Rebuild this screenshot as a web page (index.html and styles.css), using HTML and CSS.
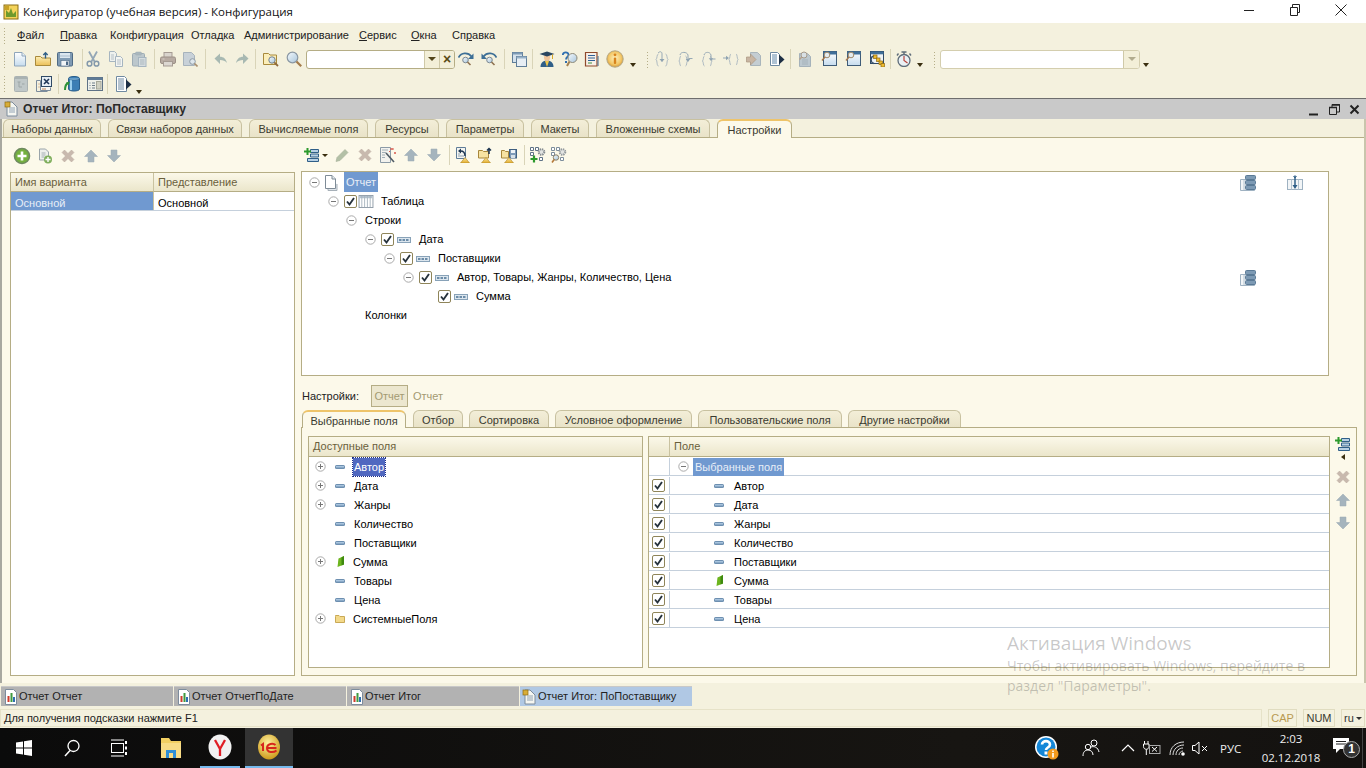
FILE: index.html
```html
<!DOCTYPE html>
<html>
<head>
    <title>Конфигуратор</title>
    <link rel="stylesheet" href="styles.css">
</head>
<body>
    <svg class="defs" width="0" height="0">
        <defs>
            <linearGradient id="g-doc" x1="0" y1="0" x2="0" y2="1"><stop offset="0" stop-color="#fff"/><stop offset="1" stop-color="#c6dcee"/></linearGradient>
            <linearGradient id="g-folder" x1="0" y1="0" x2="0" y2="1"><stop offset="0" stop-color="#fdeeb4"/><stop offset="1" stop-color="#eabf58"/></linearGradient>
            <linearGradient id="g-mag" x1="0" y1="0" x2="1" y2="1"><stop offset="0" stop-color="#f4f9fc"/><stop offset="1" stop-color="#a9c6dc"/></linearGradient>
            <radialGradient id="g-info" cx=".5" cy=".45" r=".55"><stop offset="0" stop-color="#fdf0c0"/><stop offset=".7" stop-color="#f3c766"/><stop offset="1" stop-color="#d69a3a"/></radialGradient>
            <linearGradient id="g-tri" x1="0" y1="0" x2="0" y2="1"><stop offset="0" stop-color="#fbe59a"/><stop offset="1" stop-color="#e2ad2e"/></linearGradient>
        </defs>
        <symbol id="i-logo" viewBox="0 0 16 16"><rect x="1" y="1" width="14" height="14" fill="#f4d35a" stroke="#8a6d12"/><path d="M3 13V6l3 3 2-5 2 6 3-3v6z" fill="#6f9a2d"/><path d="M2 2h4v4H2z" fill="#c9a227"/></symbol>
        <symbol id="i-new" viewBox="0 0 16 16"><path d="M2.500 1.500h7.500l3.500 3.500v10h-11z" fill="url(#g-doc)" stroke="#8fa6bb"/><path d="M10 1.500v3.500h3.500" fill="#e8f0f6" stroke="#8fa6bb"/></symbol>
        <symbol id="i-open" viewBox="0 0 16 16"><path d="M.5 5.500h5l1.500 1.500h8.500v7.500H.5z" fill="url(#g-folder)" stroke="#a98a3c"/><path d="M10.500 7.500V2M8.300 4 10.500 1.800 12.700 4" fill="none" stroke="#2f5f88" stroke-width="1.400"/></symbol>
        <symbol id="i-save" viewBox="0 0 16 16"><rect x=".5" y="1.500" width="15" height="13.500" rx="1" fill="#7f9ab3" stroke="#4e6a85"/><rect x="3" y="2" width="10" height="5" fill="#dbe6ef"/><path d="M3 5h10" stroke="#a9bccd"/><rect x="4" y="9.500" width="8" height="5.500" fill="#f2f5f7" stroke="#4e6a85" stroke-width=".6"/><rect x="9" y="10.500" width="2" height="3.500" fill="#4e6a85"/></symbol>
        <symbol id="i-cut" viewBox="0 0 16 16"><path d="M4 .5l5.500 10M12 .5 6.500 10.500" stroke="#93a6b6" stroke-width="1.800" fill="none"/><ellipse cx="4.500" cy="12.700" rx="2.300" ry="2.400" fill="none" stroke="#8398aa" stroke-width="1.500"/><ellipse cx="11.500" cy="12.700" rx="2.300" ry="2.400" fill="none" stroke="#8398aa" stroke-width="1.500"/></symbol>
        <symbol id="i-copy" viewBox="0 0 16 16"><path d="M1.500 .5h5l2 2v8h-7z" fill="#eef1ee" stroke="#a6b5c0"/><path d="M3 4h3M3 6h3M3 8h3" stroke="#b5c0c8"/><path d="M7.500 5.500h5l2 2v8h-7z" fill="#f4f5f2" stroke="#a6b5c0"/><path d="M9 9h4M9 11h4M9 13h4" stroke="#b5c0c8"/></symbol>
        <symbol id="i-paste" viewBox="0 0 16 16"><rect x="1.500" y="2.500" width="12" height="12.500" rx="1" fill="#bcc7cc" stroke="#9eacb4"/><rect x="4.500" y="1" width="6" height="3" rx="1" fill="#a9b6bd" stroke="#9eacb4" stroke-width=".5"/><rect x="7.500" y="6.500" width="7.500" height="9" fill="#d6dde0" stroke="#a6b5c0"/><path d="M9 9h4.500M9 11h4.500M9 13h4.500" stroke="#aab7be"/></symbol>
        <symbol id="i-print" viewBox="0 0 16 16"><rect x="4" y="1.500" width="8" height="5" fill="#d9d4cd" stroke="#a59b93"/><rect x=".5" y="6" width="15" height="6.500" rx="1.500" fill="#b7aba2" stroke="#9c9087"/><rect x="3.500" y="10.500" width="9" height="4.500" fill="#dcd7d1" stroke="#a59b93"/><path d="M2.500 8h2" stroke="#d6cfc8"/></symbol>
        <symbol id="i-preview" viewBox="0 0 16 16"><path d="M1.500 1.500h8l3 3v10h-11z" fill="#c8d1d8" stroke="#a7b3bc"/><circle cx="10.500" cy="10.500" r="2.800" fill="#dde6ec" stroke="#8e9aa4"/><path d="M12.500 12.500l3 3" stroke="#a98f6f" stroke-width="1.600"/></symbol>
        <symbol id="i-undo" viewBox="0 0 16 16"><path d="M1.500 7.500 7 2.500v3.300c3.500 0 6 2 7 6.200-2-2.300-4-3-7-3V13z" fill="#a8b9b2"/></symbol>
        <symbol id="i-redo" viewBox="0 0 16 16"><path d="M14.500 7.500 9 2.500v3.300c-3.500 0-6 2-7 6.200 2-2.300 4-3 7-3V13z" fill="#a8b9b2"/></symbol>
        <symbol id="i-findfile" viewBox="0 0 16 16"><path d="M.5 2.500h5l1.500 1.500h6.500v9.500H.5z" fill="#fbeeb9" stroke="#a98a3c"/><circle cx="9" cy="9" r="3.200" fill="url(#g-mag)" stroke="#74818c"/><path d="M11.300 11.300l3.700 3.700" stroke="#8f6a3e" stroke-width="1.800"/></symbol>
        <symbol id="i-mag" viewBox="0 0 16 16"><circle cx="6.500" cy="6.500" r="5.300" fill="url(#g-mag)" stroke="#8a97a3" stroke-width="1.200"/><path d="M10.500 10.500l4.700 4.700" stroke="#a47c4c" stroke-width="2.200"/></symbol>
        <symbol id="i-next" viewBox="0 0 16 16"><path d="M.5 6.500C3 1.500 10 1 13.500 5.500" fill="none" stroke="#3d6f96" stroke-width="1.700"/><path d="M15.500 2.500v5.500H10z" fill="#3d6f96"/><circle cx="7.500" cy="9" r="2.800" fill="url(#g-mag)" stroke="#7c8892"/><path d="M9.500 11l3 3" stroke="#8f7250" stroke-width="1.600"/></symbol>
        <symbol id="i-prev" viewBox="0 0 16 16"><path d="M15.500 6.500C13 1.500 6 1 2.500 5.500" fill="none" stroke="#3d6f96" stroke-width="1.700"/><path d="M.5 2.500V8H6z" fill="#3d6f96"/><circle cx="8.500" cy="9" r="2.800" fill="url(#g-mag)" stroke="#7c8892"/><path d="M10.500 11l3 3" stroke="#8f7250" stroke-width="1.600"/></symbol>
        <symbol id="i-windows" viewBox="0 0 16 16"><rect x="1.500" y="1.500" width="10" height="10" fill="#d5e2ed" stroke="#5f7d98"/><rect x="1.500" y="1.500" width="10" height="2" fill="#7f9cb6"/><rect x="5.500" y="5.500" width="10" height="10" fill="#e7eef4" stroke="#5f7d98"/><rect x="5.500" y="5.500" width="10" height="2" fill="#98b2c8"/></symbol>
        <symbol id="i-student" viewBox="0 0 16 16"><path d="M1.500 16c0-4 2.500-6.500 6.500-6.500s6.500 2.500 6.500 6.500z" fill="#2f5f88"/><path d="M6 10l2 6 2-6z" fill="#eec64a"/><ellipse cx="8" cy="6.500" rx="3" ry="3.500" fill="#f2c59a"/><path d="M.5 3 8 .5 15.500 3 8 5.500z" fill="#2a4660"/><path d="M13.500 3.500v4.500" stroke="#d9a92a"/></symbol>
        <symbol id="i-helpfind" viewBox="0 0 16 16"><path d="M.8 4C1 .5 6.500 .5 6.500 3.800 6.500 6 4 6 4 8.500" fill="none" stroke="#2f6fb0" stroke-width="1.800"/><rect x="3" y="10" width="2" height="2" fill="#2f6fb0"/><circle cx="10.500" cy="7" r="4.500" fill="url(#g-mag)" stroke="#8e8a78"/><path d="M7.500 10.500 5 15" stroke="#a4814f" stroke-width="2"/></symbol>
        <symbol id="i-book" viewBox="0 0 16 16"><path d="M1.500 1.500h11.500v13.500H1.500z" fill="#f7efe6" stroke="#8f4a2b" stroke-width="1.200"/><path d="M4 4.500h7M4 7h7M4 9.500h7" stroke="#2f6196"/><path d="M4 12h4" stroke="#3f8f3f"/><path d="M14 5v10" stroke="#5f7d98" stroke-width="1.200"/></symbol>
        <symbol id="i-info" viewBox="0 0 18 18"><circle cx="9" cy="9" r="8.200" fill="url(#g-info)" stroke="#b5a986"/><rect x="7.800" y="7.500" width="2.400" height="6.500" rx="1" fill="#d8831c"/><circle cx="9" cy="4.800" r="1.400" fill="#d8831c"/></symbol>
        <symbol id="i-debug1" viewBox="0 0 16 16"><path d="M4.500 3C2.500 3 3.500 7.500 2 8.500 3.500 9.500 2.500 15 4.500 15M11.500 3c2 0 1 4.500 2.500 5.500-1.500 1-.5 6.500-2.500 6.500" fill="none" stroke="#afbbc2"/><path d="M4 2C6 0 8 .5 8 3v7.500" fill="none" stroke="#97a9b5"/><path d="M5.500 8 8 11l2.500-3z" fill="#8fa3b1"/></symbol>
        <symbol id="i-debug2" viewBox="0 0 16 16"><path d="M4 5C2.500 5 3.200 9 2 10c1.200 1 .5 5 2 5M8.500 5c1.500 0 .8 4 2 5-1.200 1-.5 5-2 5" fill="none" stroke="#afbbc2"/><path d="M3 4c.5-3.500 7-3.500 8 0v5.500" fill="none" stroke="#97a9b5"/><path d="M11 11 8.800 8h4.400z" fill="#8fa3b1"/><path d="M11.500 7.500h4" stroke="#97a9b5"/></symbol>
        <symbol id="i-debug3" viewBox="0 0 16 16"><path d="M4.500 5C3 5 3.700 9 2.500 10c1.200 1 .5 5 2 5M10 5c1.500 0 .8 4 2 5-1.200 1-.5 5-2 5" fill="none" stroke="#afbbc2"/><path d="M4 4C5 .5 10 .5 11 4v4" fill="none" stroke="#97a9b5"/><path d="M11 10 8.800 7.200h4.400z" fill="#8fa3b1"/><path d="M12 8h3.500" stroke="#97a9b5"/></symbol>
        <symbol id="i-debug4" viewBox="0 0 16 16"><path d="M8 3C6.500 3 7.200 7.500 6 8.500 7.200 9.500 6.500 14 8 14M13 3c1.500 0 .8 4.500 2 5.500-1.200 1-.5 5.500-2 5.500" fill="none" stroke="#afbbc2"/><path d="M0 7h4" stroke="#97a9b5"/><path d="M6 7 3 4.800v4.400z" fill="#8fa3b1"/></symbol>
        <symbol id="i-debug5" viewBox="0 0 16 16"><path d="M4.500 1.500h7l3 3v10h-10z" fill="#c4cdd2" stroke="#a9b5bb"/><path d="M.5 6h4V3L10 8.500 4.500 14v-3h-4z" fill="#c8b5a2" stroke="#a9957f" stroke-width=".7"/></symbol>
        <symbol id="i-debug6" viewBox="0 0 16 16"><path d="M1.500 1.500h7l2 2v11h-9z" fill="#fff" stroke="#6f8aa2"/><path d="M3 4h5M3 6h5M3 8h5M3 10h5M3 12h5" stroke="#5e86a8"/><path d="M10 3.500l5.500 5-5.500 5z" fill="#1d2f45"/></symbol>
        <symbol id="i-calldoc" viewBox="0 0 16 16"><path d="M2.500 2.500h8l3 3v10h-11z" fill="#bcc8cf" stroke="#a5b2ba"/><path d="M5 9h6M5 11h6M5 13h6" stroke="#a5b2ba"/><circle cx="7" cy="4" r="3" fill="#d8e0e4" stroke="#a69a8a"/><path d="M4.700 6 2.500 8.500" stroke="#b5a08a" stroke-width="1.300"/></symbol>
        <symbol id="i-watch" viewBox="0 0 16 16"><rect x="2.500" y=".5" width="13" height="14" fill="url(#g-doc)" stroke="#3f5c78"/><rect x="2.500" y=".5" width="13" height="3" fill="#3f6f99"/><circle cx="6" cy="4" r="2.800" fill="#e4ecf0" stroke="#a08a6c"/><path d="M4 6 1 9.500" stroke="#a4764c" stroke-width="1.500"/></symbol>
        <symbol id="i-chain" viewBox="0 0 16 16"><rect x="1.500" y=".5" width="13" height="12" fill="#eef3f7" stroke="#2f4a66"/><rect x="1.500" y=".5" width="13" height="2.800" fill="#3f6f99"/><path d="M5 5C1.500 5.500 .5 11 5 12.500" fill="none" stroke="#38506a" stroke-width="1.500"/><rect x="4.500" y="4" width="3.500" height="3.500" fill="#eebb2f" stroke="#8f6a10" stroke-width=".7"/><rect x="7.500" y="7" width="3.500" height="3.500" fill="#eebb2f" stroke="#8f6a10" stroke-width=".7"/><rect x="10" y="10" width="3.500" height="3.500" fill="#eebb2f" stroke="#8f6a10" stroke-width=".7"/><rect x="12" y="12.500" width="3.500" height="3.500" fill="#eebb2f" stroke="#8f6a10" stroke-width=".7"/></symbol>
        <symbol id="i-timer" viewBox="0 0 16 16"><circle cx="8" cy="9.500" r="6" fill="#eaf1f5" stroke="#5f6d7a" stroke-width="1.300"/><path d="M8 5v4.500l3.500 2.500" fill="none" stroke="#b8433a" stroke-width="1.200"/><path d="M5.500 1h5M8 1v2" stroke="#5f6d7a" stroke-width="1.400"/><path d="M2.500 2.500 1 4.500M13.500 2.500l1.500 2" stroke="#5f6d7a" stroke-width="1.400"/></symbol>
        <symbol id="i-grey1" viewBox="0 0 16 16"><rect x="1.500" y=".5" width="13" height="15" rx="1" fill="#c0c8c8" stroke="#aab2b2"/><rect x="2" y="1" width="12" height="2" fill="#a9b2b2"/><path d="M4.500 6h3M6 6v5h3M9 8h2.500" fill="none" stroke="#9da6a6"/></symbol>
        <symbol id="i-cross-doc" viewBox="0 0 16 16"><path d="M.5 4.500h4v10h10v-3" fill="#f7f7f2" stroke="#7c8c9c"/><path d="M.5 4.500v11h11" fill="none" stroke="#7c8c9c"/><rect x="5.500" y=".5" width="10" height="10" fill="#e6eef5" stroke="#2f4a66"/><path d="M8 3l5 5M13 3 8 8" stroke="#1e3555" stroke-width="1.600"/><path d="M2.500 8h1M2.500 11h1M6 13h4" stroke="#c0855a"/></symbol>
        <symbol id="i-db" viewBox="0 0 16 16"><path d="M4.500 2.500c0-2.700 11-2.700 11 0v10.500c0 2.700-11 2.700-11 0z" fill="#3d7fb5" stroke="#2b5f8b"/><path d="M7 3v11" stroke="#9dd0ee" stroke-width="2"/><path d="M4.500 2.500c0 2 11 2 11 0" fill="#8dbcdc" stroke="#2b5f8b" stroke-width=".6"/><path d="M1 14c0-4 1-6 3-7" fill="none" stroke="#2d9238" stroke-width="2"/><path d="M2 6.500 6 5.500 4.500 9.500z" fill="#2d9238"/></symbol>
        <symbol id="i-form" viewBox="0 0 16 16"><rect x=".5" y="1.500" width="15" height="13" fill="#eef0ea" stroke="#5f7286"/><rect x=".5" y="1.500" width="15" height="2.500" fill="#5f7b96"/><path d="M2.500 7h1M5 7h3M2.500 9.500h1M5 9.500h3M2.500 12h1M5 12h3" stroke="#6d7c88"/><rect x="9.500" y="5.500" width="4.500" height="7.500" fill="#cfd0c2" stroke="#a6a89a"/></symbol>
        <symbol id="i-docarrow" viewBox="0 0 16 16"><path d="M.5 .5h8l2 2v13H.5z" fill="#fff" stroke="#6f8aa2"/><path d="M2 3h6M2 5h6M2 7h6M2 9h6M2 11h6M2 13h6" stroke="#6f8aa2"/><path d="M10 3.500l5.500 5-5.500 5z" fill="#1d2f45"/></symbol>
        <symbol id="i-wdoc" viewBox="0 0 16 16"><path d="M3 1h5l5 5v9H3z" fill="#f5f6f1" stroke="#7d8c9c"/><rect x="1" y="1" width="5" height="5" fill="#d8ad38" stroke="#8f6d14" stroke-width=".7"/><path d="M5 7h6M5 9h6M5 11h6" stroke="#93a4b5"/></symbol>
        <symbol id="i-report" viewBox="0 0 16 16"><path d="M2.500 .5h8l3 3v12h-11z" fill="#fff" stroke="#7d8c9c"/><rect x="4.500" y="7" width="2" height="6" fill="#cf3b2b"/><rect x="7.500" y="4" width="2" height="9" fill="#3f9a3f"/><rect x="10" y="8" width="2" height="5" fill="#2f6fb0"/></symbol>
        <symbol id="i-addgreen" viewBox="0 0 18 18"><circle cx="9" cy="9" r="7.500" fill="#74b03f" stroke="#6f8a60" stroke-width="1.600"/><path d="M9 4.500v9M4.500 9h9" stroke="#fff" stroke-width="2.600"/></symbol>
        <symbol id="i-addcopy" viewBox="0 0 16 16"><path d="M2.500 1h6l3 3v8h-9z" fill="#eef0ec" stroke="#9aa4aa"/><path d="M4.500 5h4M4.500 7h4M4.500 9h3" stroke="#a4aeb4"/><circle cx="11" cy="11.500" r="4" fill="#7fae5c"/><path d="M11 9v5M8.500 11.500h5" stroke="#fff" stroke-width="1.400"/></symbol>
        <symbol id="i-x" viewBox="0 0 16 16"><path d="M2 4.500 4.500 2 8 5.500 11.500 2 14 4.500 10.500 8 14 11.500 11.500 14 8 10.500 4.500 14 2 11.500 5.500 8z" fill="#c8b9ae" stroke="#b8a99e" stroke-width=".5"/></symbol>
        <symbol id="i-up" viewBox="0 0 16 16"><path d="M8 2l6.500 6.500H11V14H5V8.500H1.500z" fill="#a5b4bd" stroke="#98a8b2" stroke-width=".5"/></symbol>
        <symbol id="i-down" viewBox="0 0 16 16"><path d="M8 14 1.500 7.500H5V2h6v5.500h3.500z" fill="#a5b4bd" stroke="#98a8b2" stroke-width=".5"/></symbol>
        <symbol id="i-addlist" viewBox="0 0 16 16"><path d="M6.500 2.500h8v3h-8zM6.500 7h8v3h-8zM3.500 11.500h11v3h-11z" fill="#b7d0e4" stroke="#2f5f88"/><path d="M3.500 1v7M0 4.500h7" stroke="#2d9a2d" stroke-width="2"/></symbol>
        <symbol id="i-pencil" viewBox="0 0 16 16"><path d="M11 2.500l3 3L6 13.500l-4 1 1-4z" fill="#b3c0a6" stroke="#a4b098" stroke-width=".6"/></symbol>
        <symbol id="i-wand" viewBox="0 0 16 16"><path d="M.5 .5h10v15H.5z" fill="#f2f2ee" stroke="#8b9aa6"/><path d="M2 3h6M2 5.500h4M2 8h3M2 10.500h3" stroke="#a2afb8"/><path d="M6 6l8 9" stroke="#4f5b65" stroke-width="1.600"/><path d="M12 1v2M10 2h4M15 5v2M14 6h2M9 4.500h1" stroke="#d8564a"/></symbol>
        <symbol id="i-sortdoc" viewBox="0 0 16 16"><path d="M1.500 .5h9v11h-9z" fill="#f4f5f1" stroke="#5f7d98"/><path d="M3 9h6M3 7h2" stroke="#8fa0b0"/><path d="M10 9c0-4-1.500-5-4.500-5" fill="none" stroke="#1d3550" stroke-width="1.400"/><path d="M3 4l3-2.500v5z" fill="#1d3550"/><path d="M5.500 16l4.500-5.500 4.500 5.500z" fill="url(#g-tri)" stroke="#b0862a" stroke-width=".6"/></symbol>
        <symbol id="i-upload" viewBox="0 0 16 16"><path d="M.5 3.500h4l1 1h5v6.500h-10z" fill="#f7e3a2" stroke="#a8873a"/><path d="M11 7V1.500M9 3.500l2-2 2 2" fill="none" stroke="#1d3550" stroke-width="1.500"/><path d="M3.500 16 8 10.500l4.500 5.500z" fill="url(#g-tri)" stroke="#b0862a" stroke-width=".6"/></symbol>
        <symbol id="i-floppy2" viewBox="0 0 16 16"><path d="M.5 3.500h3l1 1h3v6.500h-7z" fill="#f7e3a2" stroke="#a8873a"/><rect x="8.500" y="2.500" width="7" height="8.500" fill="#7d9ab8" stroke="#3f5f80"/><rect x="10" y="3" width="4" height="3" fill="#eef3f7"/><rect x="10" y="8" width="4" height="3" fill="#d6e0e8"/><path d="M3.500 16 8 10.500l4.500 5.500z" fill="url(#g-tri)" stroke="#b0862a" stroke-width=".6"/></symbol>
        <symbol id="i-gearadd" viewBox="0 0 16 16"><path d="M.5 .5h3v3h-3zM.5 5.500h3v3h-3zM5.500 .5h3v3h-3zM9.500 10.500h3v3h-3z" fill="#fff" stroke="#5f7286"/><circle cx="11.500" cy="5" r="2.800" fill="#e2e4e2" stroke="#868c90" stroke-width="2" stroke-dasharray="1.400 .8"/><path d="M4 8.500v7M.5 12h7" stroke="#2d9a2d" stroke-width="2.200"/></symbol>
        <symbol id="i-gearfind" viewBox="0 0 16 16"><path d="M.5 .5h3v3h-3zM.5 5.500h3v3h-3zM5.500 .5h3v3h-3zM9.500 10.500h3v3h-3z" fill="#fff" stroke="#7c8d9c"/><circle cx="11.500" cy="5" r="2.800" fill="#e2e4e2" stroke="#93999d" stroke-width="2" stroke-dasharray="1.400 .8"/><circle cx="5" cy="10.500" r="2.700" fill="url(#g-mag)" stroke="#8a7f66"/><path d="M3.200 12.500 1 15.500" stroke="#b5793a" stroke-width="1.600"/></symbol>
        <symbol id="i-doc" viewBox="0 0 16 16"><path d="M5 4.500v11h9V9" fill="#dfe5ea" stroke="#a7b0b8"/><path d="M2.500 .5h6.500l3.500 3.500v9.500h-10z" fill="#fff" stroke="#7e8b97"/><path d="M9 .5v3.500h3.500" fill="#e8edf1" stroke="#7e8b97"/></symbol>
        <symbol id="i-table" viewBox="0 0 16 14"><rect x=".5" y=".5" width="15" height="13" fill="#fff" stroke="#8c99a5"/><rect x="1" y="1" width="14" height="2.500" fill="#b5c3cf"/><path d="M3.500 1v12M6.500 1v12M9.500 1v12M12.500 1v12" stroke="#a8b4be"/></symbol>
        <symbol id="i-group" viewBox="0 0 14 6"><rect x=".5" y=".5" width="13" height="5" fill="#dce6ee" stroke="#88a2b8"/><rect x="2" y="2" width="2.500" height="2" fill="#6c8ca8"/><rect x="5.500" y="2" width="2.500" height="2" fill="#6c8ca8"/><rect x="9" y="2" width="2.500" height="2" fill="#6c8ca8"/></symbol>
        <symbol id="i-field" viewBox="0 0 10 4"><rect x="0" y="0" width="10" height="4" rx="1.500" fill="#6d8fb0"/><rect x="1" y="1" width="8" height="1.500" fill="#a8c4de"/></symbol>
        <symbol id="i-sum" viewBox="0 0 7 11"><path d="M1.500 2.500 7 0v8.500L.5 11z" fill="#6db51f"/><path d="M4.500 1.500 7 0v8.500l-2.500 1z" fill="#3f8a10"/></symbol>
        <symbol id="i-folder" viewBox="0 0 10 8"><path d="M.5 1.500V.5h3.500l1 1h4.500v6h-9z" fill="#f3d98a" stroke="#c9a956"/></symbol>
        <symbol id="i-minus" viewBox="0 0 11 11"><circle cx="5.500" cy="5.500" r="4.700" fill="#fff" stroke="#a9a9a9"/><path d="M3 5.500h5" stroke="#777"/></symbol>
        <symbol id="i-plus" viewBox="0 0 11 11"><circle cx="5.500" cy="5.500" r="4.700" fill="#fff" stroke="#a9a9a9"/><path d="M3 5.500h5M5.500 3v5" stroke="#777"/></symbol>
        <symbol id="i-tick" viewBox="0 0 11 11"><path d="M2 5.500l2.500 3L9 2" fill="none" stroke="#26323c" stroke-width="1.900"/></symbol>
        <symbol id="i-stack" viewBox="0 0 16 16"><path d="M.5 4.500h14v11H.5z" fill="#f2f5f7" stroke="#9fb2c2"/><path d="M4 5v10" stroke="#b4c4d0"/><rect x="5.500" y=".5" width="10" height="4" rx="1" fill="#7d9ab4" stroke="#5a7a96"/><rect x="5.500" y="5.500" width="10" height="4" rx="1" fill="#7d9ab4" stroke="#5a7a96"/><rect x="5.500" y="10.500" width="10" height="4" rx="1" fill="#7d9ab4" stroke="#5a7a96"/></symbol>
        <symbol id="i-pin" viewBox="0 0 16 16"><rect x=".5" y="4.500" width="15" height="10" fill="#f2f5f7" stroke="#9fb2c2"/><path d="M4.500 4.500v10M11.500 4.500v10" stroke="#b4c4d0"/><path d="M8 .5v12" stroke="#2f5f88" stroke-width="1.500"/><path d="M5.500 10 8 14l2.500-4z" fill="#2f5f88"/><path d="M6.500 1 8 3l1.500-2" fill="none" stroke="#2f5f88"/></symbol>
    </svg>

    <div class="titlebar">
        <svg class="ico16 title-logo"><use href="#i-logo"/></svg>
        <span class="title-text">Конфигуратор (учебная версия) - Конфигурация</span>
        <div class="win-btns">
            <svg width="46" height="20" viewBox="0 0 46 20"><path d="M18 10.500h10" stroke="#222"/></svg>
            <svg width="46" height="20" viewBox="0 0 46 20"><path d="M18.500 7.500h7v8h-7zM20.500 7.500v-3h7v8h-2" fill="none" stroke="#222"/></svg>
            <svg width="46" height="20" viewBox="0 0 46 20"><path d="M17.500 4.500l11 11M28.500 4.500l-11 11" stroke="#222"/></svg>
        </div>
    </div>

    <div class="menubar">
        <div class="grip"></div>
        <div class="menu-items">
            <span><u>Ф</u>айл</span>
            <span><u>П</u>равка</span>
            <span>Конфигурация</span>
            <span>Отладка</span>
            <span>Администрирование</span>
            <span><u>С</u>ервис</span>
            <span><u>О</u>кна</span>
            <span>Сп<u>р</u>авка</span>
        </div>
    </div>

    <div class="toolbar tb-main">
        <div class="grip"></div>
        <div class="tb-start"></div>
        <svg class="tool"><use href="#i-new"/></svg>
        <svg class="tool"><use href="#i-open"/></svg>
        <svg class="tool"><use href="#i-save"/></svg>
        <i class="sep sep-file"></i>
        <svg class="tool"><use href="#i-cut"/></svg>
        <svg class="tool"><use href="#i-copy"/></svg>
        <svg class="tool"><use href="#i-paste"/></svg>
        <i class="sep sep-edit"></i>
        <svg class="tool"><use href="#i-print"/></svg>
        <svg class="tool"><use href="#i-preview"/></svg>
        <i class="sep sep-print"></i>
        <svg class="tool tool-narrow"><use href="#i-undo"/></svg>
        <svg class="tool tool-narrow"><use href="#i-redo"/></svg>
        <i class="sep sep-undo"></i>
        <svg class="tool"><use href="#i-findfile"/></svg>
        <svg class="tool"><use href="#i-mag"/></svg>
        <div class="combo search-combo">
            <div class="combo-input"></div>
            <div class="combo-btn"><span class="tri"></span></div>
            <div class="combo-btn combo-x">×</div>
        </div>
        <svg class="tool"><use href="#i-next"/></svg>
        <svg class="tool"><use href="#i-prev"/></svg>
        <i class="sep sep-find"></i>
        <svg class="tool tool-tight"><use href="#i-windows"/></svg>
        <i class="sep sep-win"></i>
        <svg class="tool"><use href="#i-student"/></svg>
        <svg class="tool"><use href="#i-helpfind"/></svg>
        <svg class="tool"><use href="#i-book"/></svg>
        <svg class="tool tool-info"><use href="#i-info"/></svg>
        <span class="drop"></span>
        <div class="grip grip-mid"></div>
        <svg class="tool tool-debug"><use href="#i-debug1"/></svg>
        <svg class="tool tool-d"><use href="#i-debug2"/></svg>
        <svg class="tool tool-d"><use href="#i-debug3"/></svg>
        <svg class="tool tool-d"><use href="#i-debug4"/></svg>
        <svg class="tool tool-d"><use href="#i-debug5"/></svg>
        <svg class="tool tool-d"><use href="#i-debug6"/></svg>
        <i class="sep sep-debug"></i>
        <svg class="tool tool-w"><use href="#i-calldoc"/></svg>
        <svg class="tool tool-w"><use href="#i-watch"/></svg>
        <svg class="tool tool-w"><use href="#i-watch"/></svg>
        <svg class="tool tool-w"><use href="#i-chain"/></svg>
        <i class="sep sep-watch"></i>
        <svg class="tool"><use href="#i-timer"/></svg>
        <span class="drop drop-timer"></span>
        <div class="grip grip-mid grip-last"></div>
        <div class="combo wide-combo">
            <div class="combo-input"></div>
            <div class="combo-btn combo-off"><span class="tri"></span></div>
        </div>
        <span class="drop drop-end"></span>
    </div>

    <div class="toolbar tb-second">
        <div class="grip"></div>
        <div class="tb-start tb-start-2"></div>
        <svg class="tool"><use href="#i-grey1"/></svg>
        <svg class="tool"><use href="#i-cross-doc"/></svg>
        <i class="sep sep-s1"></i>
        <svg class="tool"><use href="#i-db"/></svg>
        <svg class="tool"><use href="#i-form"/></svg>
        <i class="sep sep-s2"></i>
        <svg class="tool"><use href="#i-docarrow"/></svg>
        <span class="drop drop-second"></span>
    </div>

    <div class="window">
        <div class="caption">
            <svg class="ico16 caption-ico"><use href="#i-wdoc"/></svg>
            <b class="caption-text">Отчет Итог: ПоПоставщику</b>
            <div class="caption-btns">
                <svg width="13" height="13" viewBox="0 0 13 13"><path d="M1 11.500h9" stroke="#222" stroke-width="2"/></svg>
                <svg width="13" height="13" viewBox="0 0 13 13"><path d="M1.500 4.500h7v7h-7z M4 4V1.500h7.500V9H9" fill="none" stroke="#222"/><path d="M1 4.500h8M4 2h8" stroke="#222" stroke-width="1.300"/></svg>
                <svg width="13" height="13" viewBox="0 0 13 13"><path d="M2.500 2.500l8 8M10.500 2.500l-8 8" stroke="#222" stroke-width="2"/></svg>
            </div>
        </div>

        <div class="tabs main-tabs">
            <span class="tab t-a">Наборы данных</span>
            <span class="tab t-b">Связи наборов данных</span>
            <span class="tab t-c">Вычисляемые поля</span>
            <span class="tab t-d">Ресурсы</span>
            <span class="tab t-e">Параметры</span>
            <span class="tab t-f">Макеты</span>
            <span class="tab t-g">Вложенные схемы</span>
            <span class="tab t-h active">Настройки</span>
        </div>

        <div class="page">
            <div class="variants">
                <div class="mini-toolbar left-tools">
                    <svg class="ico18"><use href="#i-addgreen"/></svg>
                    <svg class="ico16"><use href="#i-addcopy"/></svg>
                    <svg class="ico16"><use href="#i-x"/></svg>
                    <svg class="ico16"><use href="#i-up"/></svg>
                    <svg class="ico16"><use href="#i-down"/></svg>
                </div>
                <div class="variant-table">
                    <div class="head-row">
                        <div class="head-cell variant-name">Имя варианта</div>
                        <div class="head-cell variant-view">Представление</div>
                    </div>
                    <div class="variant-row">
                        <div class="variant-name selected">Основной</div>
                        <div class="variant-view">Основной</div>
                    </div>
                </div>
            </div>

            <div class="settings">
                <div class="mini-toolbar right-tools">
                    <svg class="ico16"><use href="#i-addlist"/></svg>
                    <span class="drop drop-add"></span>
                    <svg class="ico16"><use href="#i-pencil"/></svg>
                    <svg class="ico16"><use href="#i-x"/></svg>
                    <svg class="ico16"><use href="#i-wand"/></svg>
                    <svg class="ico16"><use href="#i-up"/></svg>
                    <svg class="ico16"><use href="#i-down"/></svg>
                    <i class="sep sep-flat"></i>
                    <svg class="ico16"><use href="#i-sortdoc"/></svg>
                    <svg class="ico16"><use href="#i-upload"/></svg>
                    <svg class="ico16"><use href="#i-floppy2"/></svg>
                    <i class="sep sep-flat"></i>
                    <svg class="ico16"><use href="#i-gearadd"/></svg>
                    <svg class="ico16 gear-second"><use href="#i-gearfind"/></svg>
                </div>

                <div class="tree">
                    <div class="tree-row lv0">
                        <svg class="tgl"><use href="#i-minus"/></svg>
                        <span class="node-ico"><svg class="ico16"><use href="#i-doc"/></svg></span>
                        <span class="label selected">Отчет</span>
                        <div class="tree-side">
                            <svg class="ico16"><use href="#i-stack"/></svg>
                            <svg class="ico16"><use href="#i-pin"/></svg>
                        </div>
                    </div>
                    <div class="tree-row lv1">
                        <svg class="tgl"><use href="#i-minus"/></svg>
                        <span class="chk"><svg><use href="#i-tick"/></svg></span>
                        <span class="node-ico"><svg class="table-ico"><use href="#i-table"/></svg></span>
                        <span class="label">Таблица</span>
                    </div>
                    <div class="tree-row lv2">
                        <svg class="tgl"><use href="#i-minus"/></svg>
                        <span class="label bare">Строки</span>
                    </div>
                    <div class="tree-row lv3">
                        <svg class="tgl"><use href="#i-minus"/></svg>
                        <span class="chk"><svg><use href="#i-tick"/></svg></span>
                        <span class="node-ico"><svg class="group"><use href="#i-group"/></svg></span>
                        <span class="label">Дата</span>
                    </div>
                    <div class="tree-row lv4">
                        <svg class="tgl"><use href="#i-minus"/></svg>
                        <span class="chk"><svg><use href="#i-tick"/></svg></span>
                        <span class="node-ico"><svg class="group"><use href="#i-group"/></svg></span>
                        <span class="label">Поставщики</span>
                    </div>
                    <div class="tree-row lv5">
                        <svg class="tgl"><use href="#i-minus"/></svg>
                        <span class="chk"><svg><use href="#i-tick"/></svg></span>
                        <span class="node-ico"><svg class="group"><use href="#i-group"/></svg></span>
                        <span class="label">Автор, Товары, Жанры, Количество, Цена</span>
                        <div class="tree-side">
                            <svg class="ico16"><use href="#i-stack"/></svg>
                        </div>
                    </div>
                    <div class="tree-row lv6">
                        <span class="tgl"></span>
                        <span class="chk"><svg><use href="#i-tick"/></svg></span>
                        <span class="node-ico"><svg class="group"><use href="#i-group"/></svg></span>
                        <span class="label">Сумма</span>
                    </div>
                    <div class="tree-row lv2">
                        <span class="tgl"></span>
                        <span class="label bare">Колонки</span>
                    </div>
                </div>

                <div class="settings-for">
                    <span class="settings-label">Настройки:</span>
                    <span class="settings-btn">Отчет</span>
                    <span class="settings-name">Отчет</span>
                </div>

                <div class="tabs sub-tabs">
                    <span class="tab s-a active">Выбранные поля</span>
                    <span class="tab s-b">Отбор</span>
                    <span class="tab s-c">Сортировка</span>
                    <span class="tab s-d">Условное оформление</span>
                    <span class="tab s-e">Пользовательские поля</span>
                    <span class="tab s-f">Другие настройки</span>
                </div>

                <div class="sub-page">
                    <div class="fields">
                        <div class="head-cell fields-head">Доступные поля</div>
                        <div class="field-row"><svg class="tgl"><use href="#i-plus"/></svg><span class="f-ico"><svg class="dash"><use href="#i-field"/></svg></span><span class="field-name focused">Автор</span></div>
                        <div class="field-row"><svg class="tgl"><use href="#i-plus"/></svg><span class="f-ico"><svg class="dash"><use href="#i-field"/></svg></span><span class="field-name">Дата</span></div>
                        <div class="field-row"><svg class="tgl"><use href="#i-plus"/></svg><span class="f-ico"><svg class="dash"><use href="#i-field"/></svg></span><span class="field-name">Жанры</span></div>
                        <div class="field-row"><span class="tgl"></span><span class="f-ico"><svg class="dash"><use href="#i-field"/></svg></span><span class="field-name">Количество</span></div>
                        <div class="field-row"><span class="tgl"></span><span class="f-ico"><svg class="dash"><use href="#i-field"/></svg></span><span class="field-name">Поставщики</span></div>
                        <div class="field-row"><svg class="tgl"><use href="#i-plus"/></svg><span class="f-ico"><svg class="sum"><use href="#i-sum"/></svg></span><span class="field-name name-tight">Сумма</span></div>
                        <div class="field-row"><span class="tgl"></span><span class="f-ico"><svg class="dash"><use href="#i-field"/></svg></span><span class="field-name">Товары</span></div>
                        <div class="field-row"><span class="tgl"></span><span class="f-ico"><svg class="dash"><use href="#i-field"/></svg></span><span class="field-name">Цена</span></div>
                        <div class="field-row"><svg class="tgl"><use href="#i-plus"/></svg><span class="f-ico"><svg class="folder"><use href="#i-folder"/></svg></span><span class="field-name name-tight">СистемныеПоля</span></div>
                    </div>

                    <div class="chosen">
                        <div class="chosen-head">
                            <div class="head-cell col-check"></div>
                            <div class="head-cell col-field">Поле</div>
                        </div>
                        <div class="chosen-row">
                            <div class="col-check"></div>
                            <div class="col-field chosen-root"><svg class="tgl"><use href="#i-minus"/></svg><span class="root-name selected">Выбранные поля</span></div>
                        </div>
                        <div class="chosen-row"><div class="col-check"><span class="chk"><svg><use href="#i-tick"/></svg></span></div><div class="col-field"><span class="f-ico"><svg class="dash"><use href="#i-field"/></svg></span><span class="field-name">Автор</span></div></div>
                        <div class="chosen-row"><div class="col-check"><span class="chk"><svg><use href="#i-tick"/></svg></span></div><div class="col-field"><span class="f-ico"><svg class="dash"><use href="#i-field"/></svg></span><span class="field-name">Дата</span></div></div>
                        <div class="chosen-row"><div class="col-check"><span class="chk"><svg><use href="#i-tick"/></svg></span></div><div class="col-field"><span class="f-ico"><svg class="dash"><use href="#i-field"/></svg></span><span class="field-name">Жанры</span></div></div>
                        <div class="chosen-row"><div class="col-check"><span class="chk"><svg><use href="#i-tick"/></svg></span></div><div class="col-field"><span class="f-ico"><svg class="dash"><use href="#i-field"/></svg></span><span class="field-name">Количество</span></div></div>
                        <div class="chosen-row"><div class="col-check"><span class="chk"><svg><use href="#i-tick"/></svg></span></div><div class="col-field"><span class="f-ico"><svg class="dash"><use href="#i-field"/></svg></span><span class="field-name">Поставщики</span></div></div>
                        <div class="chosen-row"><div class="col-check"><span class="chk"><svg><use href="#i-tick"/></svg></span></div><div class="col-field"><span class="f-ico"><svg class="sum"><use href="#i-sum"/></svg></span><span class="field-name">Сумма</span></div></div>
                        <div class="chosen-row"><div class="col-check"><span class="chk"><svg><use href="#i-tick"/></svg></span></div><div class="col-field"><span class="f-ico"><svg class="dash"><use href="#i-field"/></svg></span><span class="field-name">Товары</span></div></div>
                        <div class="chosen-row"><div class="col-check"><span class="chk"><svg><use href="#i-tick"/></svg></span></div><div class="col-field"><span class="f-ico"><svg class="dash"><use href="#i-field"/></svg></span><span class="field-name">Цена</span></div></div>
                    </div>

                    <div class="side-tools">
                        <svg class="ico16"><use href="#i-addlist"/></svg>
                        <span class="tri-left"></span>
                        <svg class="ico16"><use href="#i-x"/></svg>
                        <svg class="ico16"><use href="#i-up"/></svg>
                        <svg class="ico16"><use href="#i-down"/></svg>
                    </div>
                </div>
            </div>
        </div>
    </div>

    <div class="doc-tabs">
        <div class="doc-tab"><svg class="ico16"><use href="#i-report"/></svg><span>Отчет Отчет</span></div>
        <div class="doc-tab"><svg class="ico16"><use href="#i-report"/></svg><span>Отчет ОтчетПоДате</span></div>
        <div class="doc-tab"><svg class="ico16"><use href="#i-report"/></svg><span>Отчет Итог</span></div>
        <div class="doc-tab current"><svg class="ico16"><use href="#i-wdoc"/></svg><span>Отчет Итог: ПоПоставщику</span></div>
    </div>

    <div class="statusbar">
        <div class="status-text">Для получения подсказки нажмите F1</div>
        <div class="status-box cap">CAP</div>
        <div class="status-box num">NUM</div>
        <div class="status-box lang">ru <span class="tri tri-dark"></span></div>
    </div>

    <div class="taskbar">
        <div class="task-btn start"><svg width="20" height="20" viewBox="0 0 20 20"><path d="M2 4.500 9 3.500v6H2zM10 3.300l8-1.300v7.500h-8zM2 10.500h7v6l-7-1zM10 10.500h8V18l-8-1.200z" fill="#fff"/></svg></div>
        <div class="task-btn search"><svg width="20" height="20" viewBox="0 0 20 20"><circle cx="11.500" cy="8" r="5.500" fill="none" stroke="#fff" stroke-width="1.300"/><path d="M8 12.500 3 18" stroke="#fff" stroke-width="1.500"/></svg></div>
        <div class="task-btn taskview"><svg width="20" height="20" viewBox="0 0 20 20"><path d="M2 2h13M2 18h13" stroke="#fff" stroke-width="1.200"/><rect x="2.500" y="5.500" width="12" height="9" fill="none" stroke="#fff"/><path d="M17 3v3M17 8.500v3M17 14v3" stroke="#fff" stroke-width="2"/></svg></div>
        <div class="task-btn explorer"><svg width="24" height="24" viewBox="0 0 24 24"><path d="M2 2h8l2 3h10v17H2z" fill="#f2cf62"/><path d="M2 7h20v15H2z" fill="#f8dc86"/><path d="M7 14h10v8H7z" fill="#2f8fd6"/><path d="M10 17h4v5h-4z" fill="#f8dc86"/></svg></div>
        <div class="task-btn yandex running"><svg width="26" height="26" viewBox="0 0 26 26"><ellipse cx="13" cy="13" rx="11.500" ry="12.500" fill="#f2f2f2"/><path d="M8 6l5 9 5-9M13 15v7" fill="none" stroke="#e01e26" stroke-width="2.300"/></svg></div>
        <div class="task-btn onec running open"><svg width="26" height="26" viewBox="0 0 26 26"><defs><radialGradient id="egg" cx=".45" cy=".35" r=".7"><stop offset="0" stop-color="#fff2a0"/><stop offset="1" stop-color="#c99412"/></radialGradient></defs><ellipse cx="13" cy="13" rx="11" ry="12.500" fill="url(#egg)"/><path d="M5 11.500l2-1.500v7M10.500 14h10M19.500 11c-2-2-8.500-1.800-8.500 3s6.500 5 9.500 2.500" fill="none" stroke="#d8261c" stroke-width="2"/></svg></div>
        <div class="tray">
            <div class="tray-help">
                <svg width="26" height="26" viewBox="0 0 26 26"><circle cx="12" cy="12" r="11" fill="#fff"/><circle cx="12" cy="12" r="9.500" fill="#1487d8"/><path d="M8 9.500c0-4.500 8-4.500 8 0 0 3-4 3-4 5.500" fill="none" stroke="#fff" stroke-width="2.600"/><rect x="10.500" y="16.500" width="3" height="3" fill="#fff"/><circle cx="19" cy="19" r="5.500" fill="#f39a1e"/><rect x="18.200" y="18" width="1.600" height="4.500" fill="#fff"/><rect x="18.200" y="15.500" width="1.600" height="1.500" fill="#fff"/></svg>
            </div>
            <div class="tray-people"><svg width="20" height="20" viewBox="0 0 20 20"><circle cx="7" cy="9" r="2.700" fill="none" stroke="#fff"/><path d="M2 18c0-4 2-6 5-6s5 2 5 5" fill="none" stroke="#fff"/><circle cx="13" cy="5" r="3" fill="none" stroke="#fff"/><path d="M10 9c3-1 7 0 8 5" fill="none" stroke="#fff"/></svg></div>
            <div class="tray-chev"><svg width="14" height="10" viewBox="0 0 14 10"><path d="M1 8l6-6 6 6" fill="none" stroke="#fff" stroke-width="1.200"/></svg></div>
            <div class="tray-power"><svg width="18" height="18" viewBox="0 0 18 18"><path d="M1.500 2v3M5 2v3M.5 5h5.500v2.500c0 2-1.500 2.800-2.700 2.800S.5 9.500.5 7.500zM3.300 10.500V16" fill="none" stroke="#fff"/><rect x="6.500" y="6.500" width="10.500" height="8" fill="none" stroke="#aaa"/><path d="M9 8l5 4.500M14 8l-5 4.500" stroke="#fff"/></svg></div>
            <div class="tray-wifi"><svg width="18" height="18" viewBox="0 0 18 18"><path d="M1 16C1 8 7 3 15 3M4 16c0-6 5-10 11-10M7 16c0-4 3-7 7-7M10 16c0-2 2-4 4-4" fill="none" stroke="#ddd"/><circle cx="14" cy="15" r="1.800" fill="#fff"/></svg></div>
            <div class="tray-sound"><svg width="18" height="18" viewBox="0 0 18 18"><path d="M1.500 6.500h2.500l4-3.500v12l-4-3.500H1.500z" fill="none" stroke="#fff"/><path d="M11 7l5 5M16 7l-5 5" stroke="#fff"/></svg></div>
            <div class="tray-lang">РУС</div>
            <div class="clock"><div>2:03</div><div>02.12.2018</div></div>
            <div class="tray-notes">
                <svg width="26" height="26" viewBox="0 0 26 26"><path d="M1 3h16v11h-9l-4 4v-4H1z" fill="#fff"/><path d="M4 6.500h10M4 9h10" stroke="#222"/></svg>
                <span class="badge">1</span>
            </div>
        </div>
    </div>

    <div class="activation">
        <div class="act-title">Активация Windows</div>
        <div class="act-text">Чтобы активировать Windows, перейдите в<br>раздел "Параметры".</div>
    </div>
</body>
</html>
```

FILE: styles.css
```css
* { box-sizing: border-box; }
html, body { margin: 0; padding: 0; }
body { width: 1366px; height: 768px; overflow: hidden; position: relative; display: flex; flex-direction: column; background: #f4f1de; font-family: "Liberation Sans", Arial, sans-serif; font-size: 11px; color: #000; }
.defs { position: absolute; }
svg { display: block; flex: none; }
.ico16 { width: 16px; height: 16px; }
.ico18 { width: 18px; height: 18px; }

.titlebar { height: 23px; flex: none; background: #fff; display: flex; align-items: center; padding-left: 3px; }
.title-logo { margin-right: 4px; }
.title-text { font-family: "Open Sans", sans-serif; font-size: 11.500px; color: #111; }
.win-btns { margin-left: auto; display: flex; margin-right: 2px; }
.win-btns svg { margin-top: -3px; }

.grip { width: 3px; height: 17px; flex: none; margin-left: 3px; background-image: radial-gradient(circle, #b5ae88 .8px, transparent 1px); background-size: 3px 3px; }
.menubar { height: 24px; flex: none; display: flex; align-items: center; }
.menu-items { margin-left: 11px; display: grid; grid-template-columns: 43px 50px 81px 53px 115px 52px 41px auto; color: #222; }

.toolbar { flex: none; display: flex; align-items: center; }
.tb-main { height: 24px; }
.tb-second { height: 27px; padding-bottom: 2px; }
.tb-start { width: 3px; flex: none; }
.tb-start-2 { width: 4px; }
.tool { width: 16px; height: 16px; margin: 0 3.300px; flex: none; }
.tool-narrow { margin: 0 2.500px; }
.tool-tight { margin: 0 3px; }
.tool-info { width: 18px; height: 18px; margin-left: 2.700px; margin-right: 0; }
.tool-debug { margin-left: 5.500px; margin-right: 3.500px; }
.tool-d { margin: 0 3.500px; }
.tool-w { margin: 0 4px; }
.sep { width: 1px; height: 20px; flex: none; background: #d9d4b8; }
.sep-file { margin: 0 -1.300px 0 5.700px; }
.sep-edit { margin: 0 1.700px 0 3.700px; }
.sep-print { margin: 0 4.500px 0 3.700px; }
.sep-undo { margin: 0 3.700px 0 2.500px; }
.sep-find { margin: 0 3px 0 4px; }
.sep-win { margin: 0 2.700px 0 2px; }
.sep-debug { margin: 0 1.700px 0 1.500px; }
.sep-watch { margin: 0 1.700px 0 1px; }
.sep-s1 { margin: 0 1.700px 0 3px; }
.sep-s2 { margin: 0 4.700px 0 1px; }
.sep-flat { margin: 0 -2px 0 0; }
.drop { width: 0; height: 0; flex: none; align-self: flex-end; margin: 0 0 4px 6px; border: 3.500px solid transparent; border-top: 4px solid #3a2f10; border-bottom: 0; }
.drop-timer { margin-left: 2px; }
.drop-end { margin-left: 2.500px; }
.drop-second { margin-left: 1px; margin-bottom: 2px; }
.drop-add { align-self: center; margin: 1px -1px 0 -5px; border-width: 3px; border-top-width: 3px; border-bottom: 0; }
.grip-mid { margin-left: 9.500px; margin-right: 0; }
.grip-last { margin-left: 9.500px; margin-right: 0; }

.combo { height: 19px; flex: none; display: flex; border: 1px solid #b5ad85; border-radius: 3px; background: #fff; overflow: hidden; }
.combo-input { flex: 1; }
.search-combo { width: 149px; margin: 0 0 0 1px; }
.wide-combo { width: 200px; margin-left: 4.500px; border-color: #d4ceae; }
.combo-btn { width: 15px; display: flex; align-items: center; justify-content: center; background: #f3efd8; border-left: 1px solid #cfc9a8; }
.combo-x { color: #5a4a14; font-weight: bold; font-size: 14px; line-height: 14px; }
.combo-off { width: 16px; }
.combo-off .tri { border-top-color: #b2ac8e; }
.tri { width: 0; height: 0; display: inline-block; border: 4px solid transparent; border-top: 4px solid #54461a; border-bottom: 0; }

.window { flex: none; height: 585px; border-left: 2px solid #a8a8a0; border-right: 2px solid #c9c5ac; background: #fcf9ea; display: flex; flex-direction: column; }
.caption { height: 21px; flex: none; background: #c9c9c9; border-top: 1px solid #6e6e6e; display: flex; align-items: center; padding-left: 1px; margin-left: -2px; margin-right: -2px; }
.caption-ico { margin: 0 3px 0 3px; }
.caption-text { font-size: 12.200px; color: #2a2a2a; }
.caption-btns { margin-left: auto; display: flex; gap: 7px; padding-right: 5px; }

.tabs { display: flex; align-items: flex-end; flex: none; border-bottom: 1px solid #b5ad85; }
.tab { height: 18px; display: flex; align-items: center; justify-content: center; padding-top: 1px; background: linear-gradient(#f3eed8, #e9e3c8); border: 1px solid #c8c1a0; border-bottom: 0; border-radius: 6px 6px 0 0; color: #3a3a30; white-space: nowrap; }
.tab.active { background: #fcf9ea; border-color: #b5ad85; border-top: 2px solid #eec46a; height: 19px; margin-bottom: -1px; }
.main-tabs { height: 19px; background: #f4f1de; padding-left: 1px; }
.main-tabs .tab { margin-right: 7px; }
.t-a { width: 98px; }
.t-b { width: 134px; }
.t-c { width: 119px; }
.t-d { width: 64px; }
.t-e { width: 78px; }
.t-f { width: 58px; }
.t-g { width: 114px; }
.t-h { width: 75px; }

.page { flex: 1; display: flex; min-height: 0; padding-left: 8px; }
.variants { width: 285px; flex: none; display: flex; flex-direction: column; }
.mini-toolbar { display: flex; align-items: center; height: 34px; flex: none; }
.left-tools { gap: 7px; padding: 2px 0 0 3px; }
.left-tools .ico18 { margin-right: -1px; }
.right-tools { gap: 7px; padding-left: 3px; height: 33px; }
.gear-second { margin-left: -2px; }
.variant-table { flex: none; height: 504px; border: 1px solid #b5ad85; background: #fff; }
.head-row { display: flex; height: 19px; }
.head-cell { height: 20px; background: linear-gradient(#fbf8e9, #ebe6cb); border-bottom: 1px solid #b5ad85; display: flex; align-items: center; padding: 0 0 2px 4px; color: #6a5f3c; }
.head-row .head-cell { height: 19px; padding-bottom: 0; }
.variant-name { width: 143px; flex: none; border-right: 1px solid #c9c2a0; }
.variant-view { flex: 1; }
.variant-row { display: flex; height: 19px; line-height: 22px; border-bottom: 1px solid #c5d0dc; }
.variant-row div { padding-left: 4px; }
.selected { background: #7099d0; color: #e8eef7; }

.settings { width: 1056px; flex: none; margin-left: 6px; display: flex; flex-direction: column; }
.tree { height: 205px; flex: none; background: #fff; border: 1px solid #b5ad85; width: 1028px; padding-top: 1px; }
.tree-row { height: 19px; display: flex; align-items: center; }
.tgl { width: 11px; height: 11px; flex: none; margin: 0 3px 0 4px; }
.chk { width: 13px; height: 13px; flex: none; display: flex; align-items: center; justify-content: center; background: #fff; border: 1px solid #8f8559; border-radius: 2px; }
.chk svg { width: 11px; height: 11px; }
.tree-row .chk { margin: 0 2px 0 2px; }
.tree-row.lv1 .chk { margin-right: 1px; }
.node-ico { width: 16px; height: 19px; flex: none; display: flex; align-items: center; justify-content: center; }
.group { width: 14px; height: 6px; }
.table-ico { width: 16px; height: 13px; }
.label { margin-left: 5px; padding: 0 2px; height: 19px; line-height: 19px; white-space: nowrap; }
.label.selected { height: 20px; line-height: 20px; margin-top: -2px; }
.label.bare { margin-left: 3px; }
.lv0 { padding-left: 3px; }
.lv1 { padding-left: 22px; }
.lv2 { padding-left: 40px; }
.lv3 { padding-left: 59px; }
.lv4 { padding-left: 78px; }
.lv5 { padding-left: 97px; }
.lv6 { padding-left: 116px; }
.tree-side { margin-left: auto; width: 88px; display: flex; gap: 31px; }

.settings-for { height: 34px; flex: none; display: flex; align-items: center; padding: 6px 0 0 1px; }
.settings-label { width: 69px; color: #222; }
.settings-btn { width: 37px; height: 22px; display: flex; align-items: center; justify-content: center; background: #ece7cf; border: 1px solid #b5ad85; color: #a39a72; }
.settings-name { margin-left: 5px; color: #a39a72; }

.sub-tabs { height: 18px; padding-left: 1px; width: 1056px; }
.sub-tabs .tab { margin-right: 6px; height: 17px; }
.sub-tabs .tab.active { height: 18px; margin-right: 7px; }
.s-a { width: 104px; }
.s-b { width: 50px; }
.s-c { width: 80px; }
.s-d { width: 137px; }
.s-e { width: 144px; }
.s-f { width: 113px; }

.sub-page { flex: none; height: 248px; width: 1056px; border: 1px solid #b5ad85; border-top: 0; display: flex; padding: 8px 0 0 6px; align-items: flex-start; }
.fields { width: 335px; height: 232px; flex: none; background: #fff; border: 1px solid #b5ad85; }
.field-row { height: 19px; display: flex; align-items: center; padding-left: 2px; }
.field-row .tgl { margin: 0 3px 0 4px; }
.f-ico { width: 22px; height: 19px; flex: none; display: flex; align-items: center; justify-content: center; }
.dash { width: 10px; height: 4px; }
.sum { width: 7px; height: 11px; }
.folder { width: 10px; height: 8px; }
.field-name { margin-left: 3px; white-space: nowrap; }
.field-row .name-tight { margin-left: 2px; }
.field-row .focused { background: #5068c0; color: #fff; outline: 1px dotted #20308a; margin-left: 2px; padding: 0 1px; height: 18px; line-height: 18px; }

.chosen { width: 682px; height: 232px; flex: none; margin-left: 5px; background: #fff; border: 1px solid #b5ad85; }
.chosen-head { display: flex; height: 20px; }
.chosen-head .col-check { border-right: 1px solid #c9c2a0; }
.chosen-head .col-field { flex: 1; padding-left: 4px; }
.chosen-row { display: flex; height: 19px; padding-top: 1px; border-bottom: 1px solid #c5d0dc; }
.col-check { width: 21px; flex: none; display: flex; align-items: center; justify-content: center; border-right: 1px solid #c5d0dc; }
.chosen-row .chk { margin-left: -1px; }
.chosen-row .col-field { flex: 1; display: flex; align-items: center; padding-left: 38px; }
.chosen-row .chosen-root { padding-left: 4px; }
.chosen-row .field-name { margin-left: 4px; }
.root-name { padding: 0 2px; height: 18px; line-height: 18px; margin-left: 1px; }

.side-tools { display: flex; flex-direction: column; align-items: center; margin-left: 5px; width: 16px; }
.side-tools svg:nth-child(3) { margin-top: 9px; }
.side-tools svg:nth-child(4), .side-tools svg:nth-child(5) { margin-top: 7px; }
.tri-left { width: 0; height: 0; margin-top: 2px; border: 3px solid transparent; border-right: 4px solid #3a2f10; border-left: 0; }

.doc-tabs { flex: none; height: 24px; display: flex; gap: 1px; padding: 3px 1px 1px; }
.doc-tab { width: 172px; height: 20px; display: flex; align-items: center; gap: 0; padding-left: 2px; background: #b2b2b2; color: #222; border-top: 1px solid #c8c8c8; }
.doc-tab span { margin-top: -1px; }
.doc-tab.current { background: #b0c8e4; }

.statusbar { flex: none; height: 21px; display: flex; align-items: stretch; padding: 2px 1px 1px 0; gap: 6px; }
.status-text { flex: 1; border: 1px solid #e6e2c8; line-height: 17px; padding-left: 3px; color: #222; }
.status-box { border: 1px solid #e0dcc0; display: flex; align-items: center; justify-content: center; }
.cap { width: 29px; color: #b89a50; }
.num { width: 32px; color: #3a3a30; }
.lang { width: 24px; gap: 2px; color: #333; }
.tri-dark { border-width: 3px; border-top-color: #333; }

.taskbar { flex: none; height: 40px; background: linear-gradient(90deg, #0b0b0b, #171512 70%, #141210); display: flex; align-items: stretch; color: #eee; }
.task-btn { display: flex; align-items: center; justify-content: center; flex: none; height: 40px; }
.start { width: 48px; }
.search { width: 48px; }
.taskview { width: 46px; }
.explorer { width: 58px; }
.yandex { width: 40px; }
.onec { width: 48px; margin-left: 5px; }
.open { background: #333; }
.running { border-bottom: 2px solid #76b9ed; }
.tray { margin-left: auto; display: flex; align-items: center; height: 40px; position: relative; }
.tray-help { width: 26px; margin-right: 21px; }
.tray-people { width: 20px; margin-right: 20px; }
.tray-chev { width: 14px; margin-right: 8px; }
.tray-power { width: 18px; margin-right: 8px; }
.tray-wifi { width: 18px; margin-right: 4px; }
.tray-sound { width: 18px; margin-right: 11px; }
.tray-lang { width: 26px; font-family: "Open Sans", sans-serif; font-size: 11.500px; margin-right: 7px; }
.clock { width: 76px; text-align: center; font-family: "Open Sans", sans-serif; font-size: 11.500px; line-height: 19px; margin-top: -1px; }
.tray-notes { width: 34px; height: 40px; position: relative; padding: 7px 0 0 3px; border-right: 1px solid #444; margin-right: 3px; }
.badge { position: absolute; left: 14px; top: 13px; width: 17px; height: 17px; border-radius: 50%; background: #333; border: 1px solid #aaa; font: bold 12px/15px "Liberation Sans", sans-serif; text-align: center; color: #fff; }

.activation { position: absolute; left: 1007px; top: 631px; font-family: "Open Sans", sans-serif; color: rgba(60, 60, 60, .28); }
.act-title { font-size: 19px; line-height: 24px; }
.act-text { font-size: 14px; line-height: 20px; margin-top: 1px; }
```
